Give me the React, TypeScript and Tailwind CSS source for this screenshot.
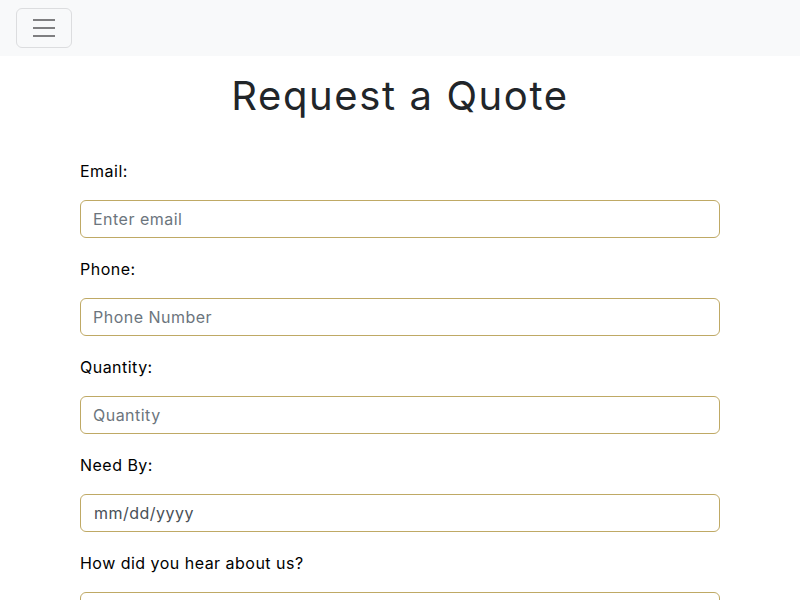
import React from "react";

const fields = [
  { label: "Email:", placeholder: "Enter email" },
  { label: "Phone:", placeholder: "Phone Number" },
  { label: "Quantity:", placeholder: "Quantity" },
];

const inputCls =
  "block w-full h-[38px] rounded-md border border-[#bfa965] bg-white text-base text-[#212529] placeholder:text-[#6c757d] outline-none tracking-[0.03em]";

const App = () => {
  return (
    <div className="min-h-screen bg-white font-['Inter',sans-serif] text-black tracking-[0.03em]">
      <nav className="h-14 bg-[#f8f9fa] px-4 flex items-center">
        <button className="w-14 h-10 rounded-md border border-[#dcdddf] flex items-center justify-center">
          <svg width="30" height="30" viewBox="0 0 30 30">
            <path
              d="M4 7h22M4 15h22M4 23h22"
              stroke="#7f7f81"
              strokeWidth="2"
              strokeLinecap="butt"
            />
          </svg>
        </button>
      </nav>
      <h1 className="mt-4 text-center text-[40px] leading-[48px] text-[#212529] tracking-[0.04em]">
        Request a Quote
      </h1>
      <form className="w-[640px] mx-auto pt-[39px]">
        {fields.map((f, i) => (
          <div key={f.label} className={i === 0 ? "" : "mt-[19px]"}>
            <label className="block leading-6 mb-[17px]">{f.label}</label>
            <input className={inputCls + " px-3"} placeholder={f.placeholder} />
          </div>
        ))}
        <div className="mt-[19px]">
          <label className="block leading-6 mb-[17px]">Need By:</label>
          <input
            className={inputCls + " pl-[13px] pr-3 text-[#495057]"}
            defaultValue="mm/dd/yyyy"
          />
        </div>
        <div className="mt-[19px] pb-6">
          <label className="block leading-6 mb-[17px]">How did you hear about us?</label>
          <select className={inputCls + " px-3"}>
            <option>Select an option</option>
          </select>
        </div>
      </form>
    </div>
  );
};

export default App;
